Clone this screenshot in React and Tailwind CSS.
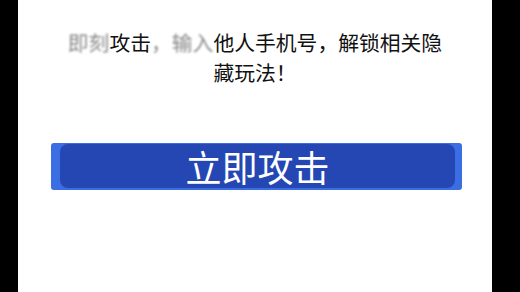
import React from 'react';

export default function App() {
  const cjk = { fontFamily: '"Noto Sans CJK SC", "Noto Sans", sans-serif' };

  return (
    <div className="flex w-[520px] h-[292px] bg-black overflow-hidden" style={cjk}>
      <div className="w-[18px] shrink-0 bg-black" />
      <div className="flex-1 bg-white flex flex-col">
        {/* message */}
        <div className="pt-[27px] text-center text-[20.8px] leading-[30px] text-[#111]">
          <span className="blur-[1.2px] text-[#8a8a8a]">即刻</span>
          <span>攻击</span>
          <span className="blur-[1.2px] text-[#8a8a8a]">，输入</span>
          <span>他人手机号，解锁相关隐</span>
          <br />
          <span>藏玩法！</span>
        </div>

        {/* attack button */}
        <div className="mt-[56px] ml-[33px] mr-[30px] h-[47px] rounded-[3px] bg-[#3a6ee2] pl-[9px] pr-[7px] pt-[1px] pb-[2px]">
          <button className="w-full h-full rounded-[8px] bg-[#2447b3] text-white text-[36px] leading-none flex items-center justify-center">
            立即攻击
          </button>
        </div>
      </div>
      <div className="w-[28px] shrink-0 bg-black" />
    </div>
  );
}
